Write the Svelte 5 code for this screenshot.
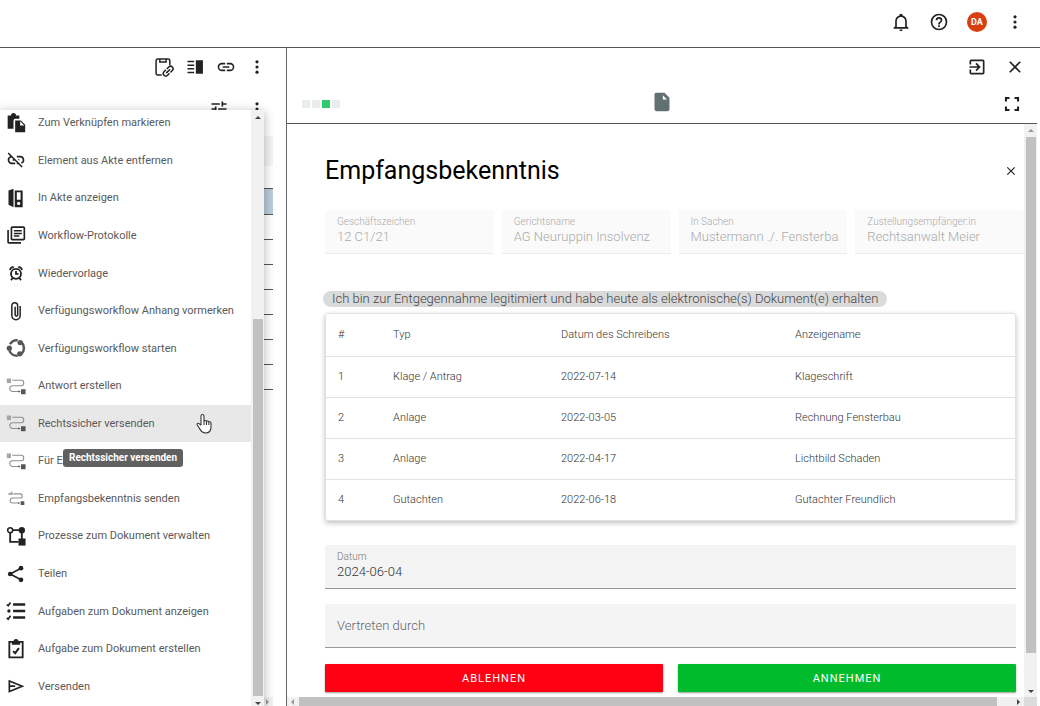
<script>
  const menu = [
    { icon: 'paste', label: 'Zum Verknüpfen markieren' },
    { icon: 'unlink', label: 'Element aus Akte entfernen' },
    { icon: 'binder', label: 'In Akte anzeigen' },
    { icon: 'library', label: 'Workflow-Protokolle' },
    { icon: 'alarm', label: 'Wiedervorlage' },
    { icon: 'clip', label: 'Verfügungsworkflow Anhang vormerken' },
    { icon: 'cycle', label: 'Verfügungsworkflow starten' },
    { icon: 'flow', label: 'Antwort erstellen' },
    { icon: 'flow', label: 'Rechtssicher versenden', active: true },
    { icon: 'flow', label: 'Für E' },
    { icon: 'flowsmall', label: 'Empfangsbekenntnis senden' },
    { icon: 'process', label: 'Prozesse zum Dokument verwalten' },
    { icon: 'share', label: 'Teilen' },
    { icon: 'tasks', label: 'Aufgaben zum Dokument anzeigen' },
    { icon: 'clipboard', label: 'Aufgabe zum Dokument erstellen' },
    { icon: 'send', label: 'Versenden' }
  ];

  const facts = [
    { id: 'gz', label: 'Geschäftszeichen', value: '12 C1/21' },
    { id: 'gn', label: 'Gerichtsname', value: 'AG Neuruppin Insolvenz' },
    { id: 'sa', label: 'In Sachen', value: 'Mustermann ./. Fensterba' },
    { id: 'ze', label: 'Zustellungsempfänger:in', value: 'Rechtsanwalt Meier' }
  ];

  const docs = [
    ['1', 'Klage / Antrag', '2022-07-14', 'Klageschrift'],
    ['2', 'Anlage', '2022-03-05', 'Rechnung Fensterbau'],
    ['3', 'Anlage', '2022-04-17', 'Lichtbild Schaden'],
    ['4', 'Gutachten', '2022-06-18', 'Gutachter Freundlich']
  ];
</script>

{#snippet icon(name)}
  <svg class="icon" viewBox="0 0 24 24" aria-hidden="true">
    {#if name === 'bell'}
      <path d="M10 21h4a2 2 0 0 1-4 0M21 19v1H3v-1l2-2v-6c0-3.100 2-5.800 5-6.700V4a2 2 0 0 1 4 0v.3c3 .9 5 3.600 5 6.700v6l2 2m-4-8a5 5 0 0 0-10 0v7h10z" />
    {:else if name === 'help'}
      <path d="M11 18h2v-2h-2zM12 2a10 10 0 1 0 0 20 10 10 0 0 0 0-20m0 18a8 8 0 1 1 0-16 8 8 0 0 1 0 16m0-14a4 4 0 0 0-4 4h2a2 2 0 1 1 4 0c0 2-3 1.750-3 5h2c0-2.250 3-2.500 3-5a4 4 0 0 0-4-4" />
    {:else if name === 'dots'}
      <circle cx="12" cy="5.800" r="1.900" /><circle cx="12" cy="12" r="1.900" /><circle cx="12" cy="18.200" r="1.900" />
    {:else if name === 'exit'}
      <path d="M10.090 15.590 11.500 17l5-5-5-5-1.410 1.410L12.670 11H3v2h9.670zM19 3H5a2 2 0 0 0-2 2v4h2V5h14v14H5v-4H3v4a2 2 0 0 0 2 2h14a2 2 0 0 0 2-2V5a2 2 0 0 0-2-2" />
    {:else if name === 'close'}
      <path d="M19 6.410 17.590 5 12 10.590 6.410 5 5 6.410 10.590 12 5 17.590 6.410 19 12 13.410 17.590 19 19 17.590 13.410 12z" />
    {:else if name === 'full'}
      <path d="M3.500 3.500H9V6H6v3H3.500zM15 3.500h5.500V9H18V6h-3zM3.500 15H6v3h3v2.500H3.500zM18 15h2.500v5.500H15V18h3z" />
    {:else if name === 'file'}
      <path d="M5 1h10l6 6v13a3 3 0 0 1-3 3H6a3 3 0 0 1-3-3V3a2 2 0 0 1 2-2m8 3v5h5z" fill-rule="evenodd" />
    {:else if name === 'cliplink'}
      <g fill="none" stroke="currentColor" stroke-width="1.800" stroke-linecap="round">
        <path d="M8.500 21.500H4.500A2 2 0 0 1 2.500 19.500v-15a2 2 0 0 1 2-2h12.500a2 2 0 0 1 2 2V9M7 2.500V6h7.500V2.500" />
        <g transform="rotate(-45 17 17)">
          <path d="M15.500 14H13a3 3 0 0 0 0 6h2.500M18.500 14H21a3 3 0 0 1 0 6h-2.500M14.500 17h5" />
        </g>
      </g>
    {:else if name === 'split'}
      <path d="M3 4.500h8v1.800H3zM3 8.900h8v1.800H3zM3 13.300h8v1.800H3zM3 17.700h8v1.800H3zM13 4h8.500v16H13z" />
    {:else if name === 'link'}
      <path d="M3.900 12A3.100 3.100 0 0 1 7 8.900h4V7H7a5 5 0 0 0 0 10h4v-1.900H7A3.100 3.100 0 0 1 3.900 12M8 13h8v-2H8zm9-6h-4v1.900h4a3.100 3.100 0 0 1 0 6.200h-4V17h4a5 5 0 0 0 0-10" />
    {:else if name === 'tune'}
      <path d="M3 5h10v2H3zM15 3h2v2h4v2h-4v2h-2zM7 9h2v6H7v-2H3v-2h4zM11 11h10v2H11zM3 17h6v2H3zM11 15h2v2h8v2h-8v2h-2z" />
    {:else if name === 'paste'}
      <path d="M2 3h4a3 3 0 0 1 6 0h4v4h-5a2 2 0 0 0-2 2v10H2zM11 9h7l5 5v9H11zm6 1v5h5z" fill-rule="evenodd" />
    {:else if name === 'unlink'}
      <path d="M17 7h-4v1.900h4a3.100 3.100 0 0 1 .79 6.080l1.460 1.460A5 5 0 0 0 17 7m-1 4h-2.190l2 2H16zM2 4.270l3.110 3.110A5 5 0 0 0 7 17h4v-1.900H7a3.100 3.100 0 0 1-.34-6.170L8.730 11H8v2h2.730L13 15.270V17h1.730l4.010 4L20 19.740 3.270 3z" />
    {:else if name === 'binder'}
      <path d="M3 3l6-2v22l-6-3zM10.500 3H20v20h-9.500zm2.500 2v9h4.500V5zm2.200 11.500a2 2 0 1 0 0 4 2 2 0 0 0 0-4" fill-rule="evenodd" />
    {:else if name === 'library'}
      <path d="M3.500 6H1.500v14.500a2 2 0 0 0 2 2H18v-2H3.500zM21 1.500H7.500a2 2 0 0 0-2 2v13a2 2 0 0 0 2 2H21a2 2 0 0 0 2-2v-13a2 2 0 0 0-2-2m0 15H7.500v-13H21zM9.500 6H19v1.800H9.500zM9.500 9.200H19V11H9.500zM9.500 12.400H16v1.800H9.500z" />
    {:else if name === 'alarm'}
      <g fill="none" stroke="currentColor" stroke-width="2.200">
        <circle cx="12" cy="13" r="6" /><path d="M12 9.500V13h3M5 8.500a3 3 0 0 1 4.500-3M19 8.500a3 3 0 0 0-4.500-3M8 18l-2 2.500M16 18l2 2.500" />
      </g>
    {:else if name === 'clip'}
      <path d="M17 6v11.500a5 5 0 0 1-10 0V5.500a3.500 3.500 0 0 1 7 0v11a1.500 1.500 0 0 1-3 0V7" fill="none" stroke="currentColor" stroke-width="1.800" />
    {:else if name === 'cycle'}
      <g class="soft">
        <path d="M4.800 7.500A9.500 9.500 0 0 1 14 2.700M18.500 5a9.500 9.500 0 0 1 0 14M14 21.300a9.500 9.500 0 0 1-10-6.500" fill="none" stroke="currentColor" stroke-width="3" />
        <circle cx="4" cy="12.200" r="3.200" /><circle cx="17" cy="5.500" r="3.200" /><circle cx="16.500" cy="19" r="3.200" />
      </g>
    {:else if name === 'flow'}
      <g class="grey">
        <path d="M7.500 5H18a3.300 3.300 0 0 1 0 6.600H8a3.500 3.500 0 0 0 0 7h8" fill="none" stroke="currentColor" stroke-width="1.300" />
        <path d="M1 3h5v5.500H1z" /><path class="soft" d="M18 16h5.500v6H18zM15 17l2.500 1.600L15 20.200z" />
      </g>
    {:else if name === 'flowsmall'}
      <g class="grey">
        <path d="M9 7h8a2.500 2.500 0 0 1 2.500 2.500A2.500 2.500 0 0 1 17 12H8a3 3 0 0 0 0 6h7" fill="none" stroke="currentColor" stroke-width="1.300" />
        <path d="M3 6h2l2-2 1.500 2.500-1 2H3z" /><path class="soft" d="M17.500 16H22v4.500h-4.500zM14.500 16.800 17 18l-2.500 1.200z" />
      </g>
    {:else if name === 'process'}
      <circle cx="5" cy="5" r="3" fill="none" stroke="currentColor" stroke-width="1.800" />
      <circle cx="19" cy="5" r="3.800" /><path d="M15 15h8.500v8.500H15z" />
      <path d="M8 5h8M19 8v8M5 8v11h10" fill="none" stroke="currentColor" stroke-width="2.200" />
    {:else if name === 'share'}
      <circle cx="5" cy="12" r="2.800" /><circle cx="18" cy="5" r="2.800" /><circle cx="18" cy="19" r="2.800" />
      <path d="M18 5 5 12l13 7" fill="none" stroke="currentColor" stroke-width="2" />
    {:else if name === 'tasks'}
      <path d="M8.500 2.800H23v3H8.500zM8.500 10.500H23v3H8.500zM8.500 18.200H23v3H8.500z" />
      <circle cx="3.500" cy="12" r="2" />
      <path d="m1 4.200 1.600 1.600 2.800-4M1 20.200l1.600 1.600 2.800-4" fill="none" stroke="currentColor" stroke-width="2" />
    {:else if name === 'clipboard'}
      <path d="M4 3.500h16V22H4z" fill="none" stroke="currentColor" stroke-width="2.200" />
      <path d="M7 3h2a3 3 0 0 1 6 0h2v4H7z" />
      <path d="m8.500 14.500 2.500 2.500 4.500-6" fill="none" stroke="currentColor" stroke-width="2.400" />
    {:else if name === 'send'}
      <path d="M4 6v12.500L19.500 12.200zM4 12.200h7" fill="none" stroke="currentColor" stroke-width="2" />
    {/if}
  </svg>
{/snippet}

<div class="app">
  <header class="topbar">
    <button class="tool" aria-label="Benachrichtigungen">{@render icon('bell')}</button>
    <button class="tool" aria-label="Hilfe">{@render icon('help')}</button>
    <button class="tool avatar">DA</button>
    <button class="tool" aria-label="Mehr">{@render icon('dots')}</button>
  </header>

  <main>
    <section class="left">
      <div class="bar">
        <button class="tool" aria-label="Verknüpfung einfügen">{@render icon('cliplink')}</button>
        <button class="tool" aria-label="Ansicht teilen">{@render icon('split')}</button>
        <button class="tool" aria-label="Verknüpfen">{@render icon('link')}</button>
        <button class="tool" aria-label="Mehr">{@render icon('dots')}</button>
      </div>
      <div class="bar second">
        <button class="tool" aria-label="Filter">{@render icon('tune')}</button>
        <button class="tool" aria-label="Mehr">{@render icon('dots')}</button>
      </div>
      <div class="search"></div>
      <div class="rows">
        <div class="row chosen"></div>
        {#each Array(7) as _}<div class="row"></div>{/each}
      </div>
      <div class="leftscroll"><i class="arrow east pale"></i></div>

      <div class="menu">
        <ul>
          {#each menu as item}
            <li class:active={item.active}>
              <button class="entry">{@render icon(item.icon)}<span>{item.label}</span></button>
              {#if item.active}
                <span class="tip" role="tooltip">{item.label}</span>
                <svg class="hand" viewBox="0 0 16 21" aria-hidden="true">
                  <path d="M5 12V3a1.500 1.500 0 0 1 3 0v6c0-2 2.500-1.800 2.500 0 0-1.500 2.400-1.500 2.400.4 0-1 2.100-1 2.100.8V14c0 4-2 6-5.500 6C6 20 5 18 3.500 15.500L1.300 12c-.8-1.500.8-2.300 1.900-1.300zM8 9v3M10.500 9v3M12.900 9.500V12" fill="#fff" stroke="#333" stroke-width="1.100" stroke-linejoin="round" />
                </svg>
              {/if}
            </li>
          {/each}
        </ul>
        <div class="vscroll"><i class="arrow up"></i><i class="thumb low"></i><i class="arrow down"></i></div>
      </div>
    </section>

    <section class="right">
      <div class="bar panel">
        <button class="tool" aria-label="Öffnen">{@render icon('exit')}</button>
        <button class="tool" aria-label="Schließen">{@render icon('close')}</button>
      </div>
      <div class="viewer">
        <div class="steps"><i></i><i></i><i class="on"></i><i></i></div>
        <span class="file">{@render icon('file')}</span>
        <button class="tool end" aria-label="Vollbild">{@render icon('full')}</button>
      </div>

      <div class="body">
        <form class="sheet" onsubmit={(e) => e.preventDefault()}>
          <div class="title">
            <h1>Empfangsbekenntnis</h1>
            <button type="button" class="tool small" aria-label="Formular schließen">{@render icon('close')}</button>
          </div>
          <div class="facts">
            {#each facts as f}
              <div class="field off">
                <label for={f.id}>{f.label}</label>
                <input id={f.id} value={f.value} disabled />
              </div>
            {/each}
          </div>
          <p class="note">Ich bin zur Entgegennahme legitimiert und habe heute als elektronische(s) Dokument(e) erhalten</p>
          <table>
            <thead>
              <tr><th>#</th><th>Typ</th><th>Datum des Schreibens</th><th>Anzeigename</th></tr>
            </thead>
            <tbody>
              {#each docs as d}
                <tr>{#each d as cell}<td>{cell}</td>{/each}</tr>
              {/each}
            </tbody>
          </table>
          <div class="field">
            <label for="datum">Datum</label>
            <input id="datum" value="2024-06-04" />
          </div>
          <div class="field">
            <input id="vertreten" placeholder="Vertreten durch" aria-label="Vertreten durch" />
          </div>
          <div class="actions">
            <button type="button" class="no">ABLEHNEN</button>
            <button type="submit" class="yes">ANNEHMEN</button>
          </div>
        </form>
        <div class="vscroll wide"><i class="arrow up pale"></i><i class="thumb"></i><i class="arrow down"></i></div>
      </div>
      <div class="hscroll"><i class="arrow west pale"></i><i class="thumb"></i><i class="arrow east"></i><i class="corner"></i></div>
    </section>
  </main>
</div>

<style>
  :global(body) { margin: 0; background: #fff; }
  .app, .app * { box-sizing: border-box; }
  .app {
    height: 100vh;
    display: flex;
    flex-direction: column;
    overflow: hidden;
    font-family: Roboto, "Liberation Sans", sans-serif;
    color: #222;
  }
  button { border: 0; padding: 0; background: none; font: inherit; color: inherit; }
  .icon { display: block; width: 100%; height: 100%; fill: currentColor; }
  .soft { color: #55585a; fill: #55585a; }
  .grey { color: #8f8f8f; fill: #a5a5a5; }
  .tool { width: 20px; height: 20px; flex: none; }

  .topbar {
    flex: none;
    height: 48px;
    padding: 0 15px 4px 0;
    display: flex;
    align-items: center;
    justify-content: flex-end;
    gap: 18px;
    border-bottom: 1px solid #555;
  }
  .avatar { border-radius: 50%; background: #d84012; color: #fff; font-size: 9px; font-weight: 700; }

  main { flex: 1; min-height: 0; display: flex; }
  .left {
    position: relative;
    flex: none;
    width: 286px;
    display: flex;
    flex-direction: column;
  }
  .bar { flex: none; height: 38px; padding-right: 19px; display: flex; align-items: center; justify-content: flex-end; gap: 11px; }
  .bar.second { height: 50px; padding-bottom: 4px; gap: 18px; }
  .search { flex: none; height: 30px; margin-right: 13px; background: #f3f3f3; }
  .rows { flex: 1; min-height: 0; margin: 22px 13px 0 0; overflow: hidden; }
  .row { height: 25px; border-bottom: 1px solid #555; }
  .chosen { height: 27px; border-top: 1px solid #555; background: #b9cddb; }
  .leftscroll { flex: none; height: 9px; margin-right: 13px; padding-right: 4px; background: #f1f1f1; display: flex; align-items: center; justify-content: flex-end; }

  .menu {
    position: absolute;
    inset: 62px 22px 0 0;
    display: flex;
    background: #fff;
    box-shadow: 0 2px 10px rgba(0, 0, 0, .3);
    clip-path: inset(-12px -12px 0 0);
  }
  .menu ul { flex: 1; min-width: 0; margin: -6px 0 0; padding: 0 0 1px; list-style: none; display: flex; flex-direction: column; }
  .menu li { position: relative; flex: 1; min-height: 0; }
  .menu li.active { background: #e8e8e8; }
  .entry { width: 100%; height: 100%; padding-left: 6px; display: flex; align-items: center; gap: 12px; font-size: 11px; color: #5a5a5a; text-align: left; white-space: nowrap; }
  .entry .icon { flex: none; width: 20px; height: 20px; color: #222; }
  .tip {
    position: absolute;
    z-index: 1;
    left: 63px;
    top: 44px;
    padding: 0 6px;
    border-radius: 3px;
    background: #616161;
    color: #fff;
    font-size: 10px;
    font-weight: 700;
    line-height: 18px;
    white-space: nowrap;
  }
  .hand { position: absolute; left: 196px; top: 8px; width: 16px; height: 21px; }

  .vscroll { flex: none; width: 13px; display: flex; flex-direction: column; align-items: center; background: #f1f1f1; padding: 6px 0 1px; }
  .thumb { flex: 1; background: #c1c1c1; }
  .vscroll .thumb { width: 10px; margin-bottom: 6px; }
  .vscroll .thumb.low { margin-top: 200px; }
  .arrow { flex: none; width: 0; height: 0; border: 3px solid transparent; color: #444; }
  .arrow.pale { color: #999; }
  .up { border-bottom-color: currentColor; border-top-width: 0; }
  .down { border-top-color: currentColor; border-bottom-width: 0; }
  .west { border-right-color: currentColor; border-left-width: 0; }
  .east { border-left-color: currentColor; border-right-width: 0; }

  section.right { flex: 1; min-width: 0; display: flex; flex-direction: column; border-left: 1px solid #666; margin-right: 3px; }
  .bar.panel { padding-right: 12px; gap: 18px; }
  .viewer { flex: none; height: 38px; padding: 0 15px 2px; display: grid; grid-template-columns: 1fr auto 1fr; align-items: center; border-bottom: 1px solid #555; }
  .end { justify-self: end; }
  .steps { display: flex; gap: 2px; }
  .steps i { width: 8px; height: 8px; background: #e9eded; }
  .steps .on { background: #2ecc71; }
  .file { width: 20px; height: 20px; margin-bottom: 4px; color: #607073; }

  .body { flex: 1; min-height: 0; display: flex; }
  .sheet { flex: 1; min-width: 0; padding: 28px 8px 0 38px; overflow: hidden; font-weight: 300; }
  .title { display: flex; align-items: center; justify-content: space-between; height: 38px; }
  h1 { margin: 0; font-size: 25px; font-weight: 400; line-height: 36px; color: #000; }
  .small { width: 14px; height: 14px; margin-right: -2px; }
  .facts { display: grid; grid-template-columns: repeat(4, minmax(0, 1fr)); gap: 8px; margin: 20px -8px 0 0; }
  .field {
    height: 44px;
    margin-bottom: 15px;
    padding: 0 8px 0 12px;
    display: flex;
    flex-direction: column;
    justify-content: center;
    background: #f4f4f4;
    border-bottom: 1px solid #999;
    border-radius: 3px 3px 0 0;
  }
  .field:has(label) { padding-bottom: 2px; }
  .field label { font-size: 10px; line-height: 12px; color: #777; }
  .field input { width: 100%; height: 18px; padding: 0; border: 0; background: none; font: inherit; font-size: 13px; color: #333; }
  .field input::placeholder { color: #666; opacity: 1; }
  .field.off { margin: 0; background: #fafafa; border-color: #ececec; }
  .field.off label, .field.off input { color: #aaa; }
  .note {
    width: fit-content;
    margin: 37px 0 6px -2px;
    padding: 0 9px;
    border-radius: 8px;
    background: #dadada;
    color: #444;
    font-size: 13px;
    line-height: 16px;
    white-space: nowrap;
  }
  table {
    width: 100%;
    margin-bottom: 24px;
    border-collapse: separate;
    border-spacing: 0;
    table-layout: fixed;
    border: 1px solid #e2e2e2;
    border-radius: 3px;
    box-shadow: 0 2px 5px rgba(0, 0, 0, .25);
    font-size: 11px;
    color: #333;
  }
  th, td { height: 41px; padding: 0 0 2px 12px; text-align: left; font-weight: 300; border-bottom: 1px solid #e2e2e2; }
  th { height: 43px; }
  th:nth-child(1) { width: 55px; }
  th:nth-child(2) { width: 168px; }
  th:nth-child(3) { width: 234px; }
  tbody tr:last-child td { height: 40px; border-bottom: 0; }
  .actions { display: grid; grid-template-columns: 1fr 1fr; gap: 15px; margin-top: 16px; }
  .actions button { height: 28px; border-radius: 1px; color: #fff; font-size: 11px; font-weight: 400; letter-spacing: 1px; box-shadow: 0 1px 2px rgba(0, 0, 0, .4); }
  .no { background: #ff0013; }
  .yes { background: #00bc2d; }

  .wide { padding: 5px 0 4px; gap: 5px; }
  .vscroll.wide .thumb { margin-bottom: 32px; }
  .hscroll { flex: none; height: 9px; display: flex; align-items: center; background: #f1f1f1; padding-left: 4px; }
  .hscroll .thumb { height: 9px; margin: 0 20px 0 5px; }
  .corner { width: 13px; height: 9px; margin-left: 4px; background: #dcdcdc; }
</style>
